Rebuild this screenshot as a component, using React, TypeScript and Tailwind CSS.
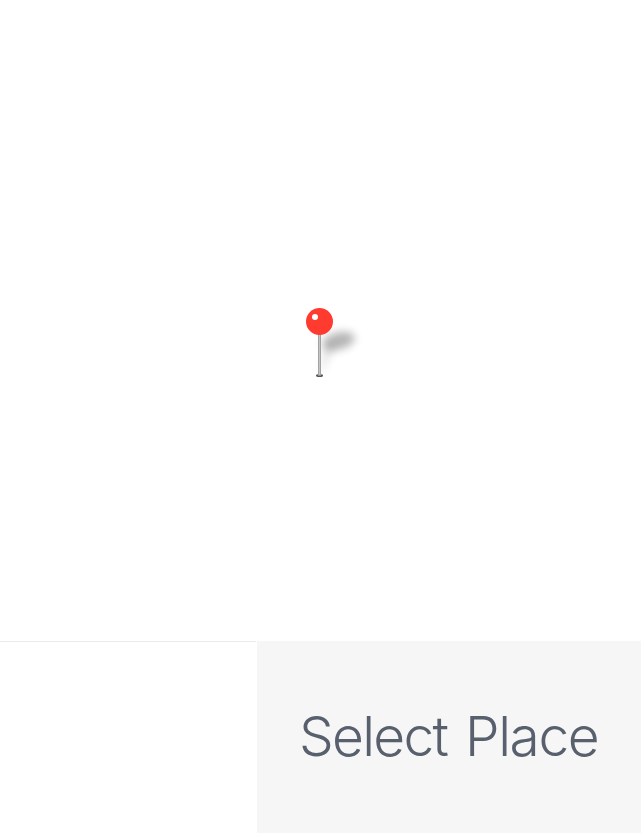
function Pin() {
  return (
    <svg width="70" height="85" viewBox="0 0 70 85" aria-hidden="true">
      <defs>
        <filter id="soft" x="-60%" y="-100%" width="220%" height="300%">
          <feGaussianBlur stdDeviation="4" />
        </filter>
        <linearGradient id="needle" x1="0" x2="1" y1="0" y2="0">
          <stop offset="0" stopColor="#949497" />
          <stop offset="0.5" stopColor="#c4c4c6" />
          <stop offset="1" stopColor="#909093" />
        </linearGradient>
      </defs>
      <ellipse cx="43.5" cy="41" rx="16.5" ry="8.5" transform="rotate(-14 43.5 41)" fill="#000" opacity="0.29" filter="url(#soft)" />
      <path d="M25 76 L31 45 L40 45 Z" fill="#000" opacity="0.14" filter="url(#soft)" />
      <ellipse cx="24.5" cy="75.5" rx="3.5" ry="1.5" fill="#555" />
      <rect x="23" y="33" width="3" height="42" fill="url(#needle)" />
      <rect x="23" y="75" width="3" height="1" fill="#8e8e90" />
      <circle cx="24.5" cy="21.5" r="13.5" fill="#ff3b30" />
      <circle cx="20" cy="17" r="3" fill="#fff" />
    </svg>
  );
}

export default function App() {
  return (
    <main className="flex h-[833px] w-[641px] flex-col overflow-hidden bg-white">
      <section className="flex h-[641px] pt-[300px] pl-[295px]">
        <Pin />
      </section>
      <footer className="flex h-48">
        <div className="mr-px w-64 border-t border-[#ebebeb]" />
        <button className="flex flex-1 items-center justify-start bg-[#f6f6f6] pb-0.5 pl-[42px] font-['Inter',sans-serif] text-[55px] font-[340] whitespace-nowrap text-[#59606d]">
          <span className="w-[166px] text-left tracking-[-1.7px]">Select</span>{" "}
          <span className="tracking-[-1.4px]">Place</span>
        </button>
      </footer>
    </main>
  );
}
